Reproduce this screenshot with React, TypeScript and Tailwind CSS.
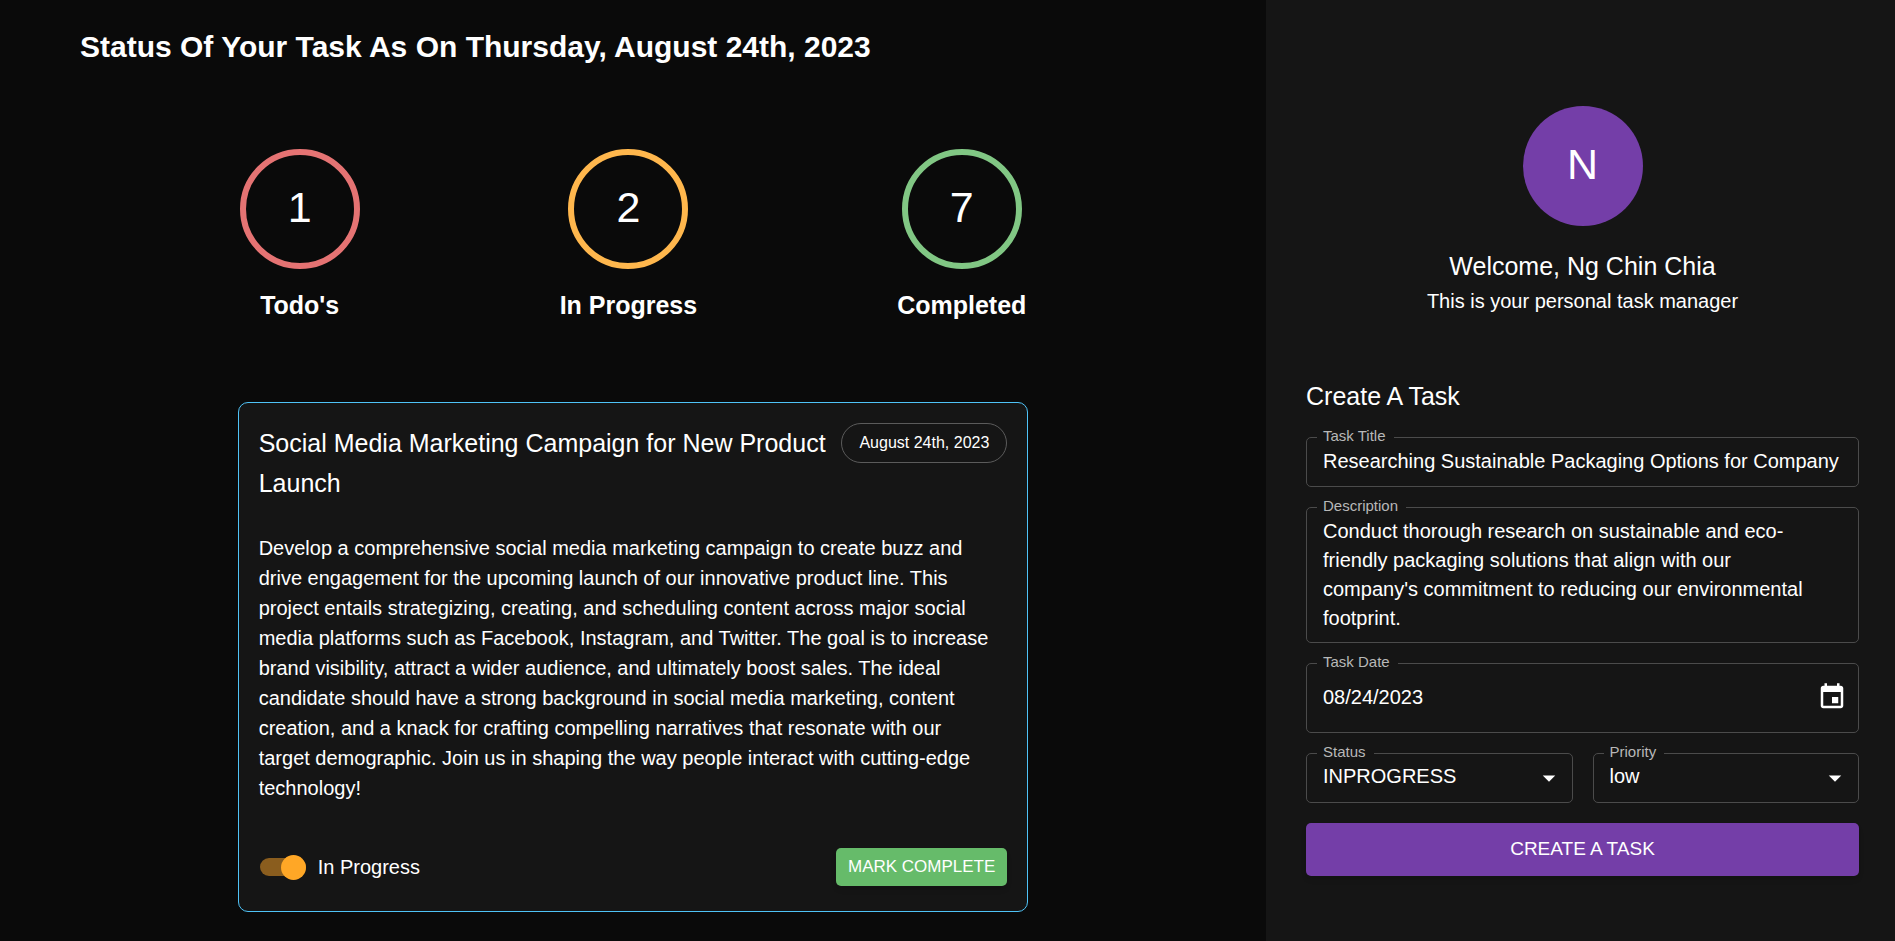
import { useState } from 'react';
import type { ReactNode } from 'react';

const stats = [
  { label: "Todo's", count: 1, ring: 'border-[#e57373]' },
  { label: 'In Progress', count: 2, ring: 'border-[#ffb74d]' },
  { label: 'Completed', count: 7, ring: 'border-[#81c784]' },
];

function Stat({ label, count, ring }: { label: string; count: number; ring: string }) {
  return (
    <div className="flex flex-col items-center gap-4">
      <div
        className={`flex size-[120px] items-center justify-center rounded-full border-6 pb-1 text-[43px] leading-none ${ring}`}
      >
        {count}
      </div>
      <h2 className="text-[25px] leading-10 font-bold">{label}</h2>
    </div>
  );
}

function Field({ id, label, children }: { id: string; label: string; children: ReactNode }) {
  return (
    <div className="relative rounded-[5px] border border-[#4b4b4b]">
      <label
        htmlFor={id}
        className="absolute -top-3 left-[10px] bg-[#151515] pr-2 pl-1.5 text-[15px] leading-5 text-[#b8b8b8]"
      >
        {label}
      </label>
      {children}
    </div>
  );
}

function Select({ id, label, options }: { id: string; label: string; options: string[] }) {
  return (
    <Field id={id} label={label}>
      <select
        id={id}
        className="block h-12 w-full appearance-none bg-transparent pr-10 pb-1 pl-4 text-xl outline-none"
      >
        {options.map((option) => (
          <option key={option}>{option}</option>
        ))}
      </select>
      <svg
        viewBox="0 0 24 24"
        className="pointer-events-none absolute top-[9px] right-2 size-[30px] fill-white"
        aria-hidden="true"
      >
        <path d="M7 10l5 5 5-5z" />
      </svg>
    </Field>
  );
}

function TaskCard() {
  const [active, setActive] = useState(true);
  return (
    <article className="rounded-[10px] border border-[#4fc3f7] bg-[#151515] p-5">
      <header className="flex items-start justify-between">
        <h3 className="text-[25px] leading-10">
          Social Media Marketing Campaign for New Product Launch
        </h3>
        <span className="flex h-10 shrink-0 items-center rounded-full border border-[#5b5b5b] px-[17px] text-base">
          August 24th, 2023
        </span>
      </header>
      <p className="mt-[30px] pr-3 text-xl leading-[30px]">
        Develop a comprehensive social media marketing campaign to create buzz and drive engagement
        for the upcoming launch of our innovative product line. This project entails strategizing,
        creating, and scheduling content across major social media platforms such as Facebook,
        Instagram, and Twitter. The goal is to increase brand visibility, attract a wider audience,
        and ultimately boost sales. The ideal candidate should have a strong background in social
        media marketing, content creation, and a knack for crafting compelling narratives that
        resonate with our target demographic. Join us in shaping the way people interact with
        cutting-edge technology!
      </p>
      <footer className="mt-10 flex h-12 items-center justify-between">
        <label className="flex items-center gap-3 text-xl">
          <span className="relative flex h-[25px] w-[47px] items-center justify-end">
            <input
              type="checkbox"
              role="switch"
              checked={active}
              onChange={() => setActive(!active)}
              className="peer h-[18px] w-[46px] appearance-none rounded-full bg-white/30 checked:bg-[#8a5d1e]"
            />
            <span className="pointer-events-none absolute left-0 size-[25px] rounded-full bg-[#ffa726] peer-checked:left-[22px]" />
          </span>
          In Progress
        </label>
        <button
          type="button"
          className="h-[38px] rounded-[5px] bg-[#66bb6a] px-3 text-[17px] shadow-md"
        >
          MARK COMPLETE
        </button>
      </footer>
    </article>
  );
}

function CreateTaskForm() {
  return (
    <form className="mt-[59px] flex flex-col gap-5" onSubmit={(e) => e.preventDefault()}>
      <h2 className="text-[25px] leading-[42px]">Create A Task</h2>
      <Field id="title" label="Task Title">
        <input
          id="title"
          type="text"
          defaultValue="Researching Sustainable Packaging Options for Company"
          className="block h-12 w-full bg-transparent px-4 pb-0.5 text-xl outline-none"
        />
      </Field>
      <Field id="description" label="Description">
        <textarea
          id="description"
          rows={4}
          defaultValue="Conduct thorough research on sustainable and eco-friendly packaging solutions that align with our company's commitment to reducing our environmental footprint."
          className="block w-full resize-none overflow-hidden bg-transparent py-[9px] pr-8 pl-4 text-xl leading-[29px] outline-none"
        />
      </Field>
      <Field id="date" label="Task Date">
        <div className="flex h-[68px] items-center pr-[11px] pb-0.5 pl-4">
          <input
            id="date"
            type="text"
            defaultValue="08/24/2023"
            className="min-w-0 flex-1 bg-transparent text-xl outline-none"
          />
          <button type="button" aria-label="Choose date">
            <svg viewBox="0 0 24 24" className="size-[30px] fill-white" aria-hidden="true">
              <path d="M17 12h-5v5h5v-5zM16 1v2H8V1H6v2H5c-1.11 0-1.99.9-1.99 2L3 19c0 1.1.89 2 2 2h14c1.1 0 2-.9 2-2V5c0-1.1-.9-2-2-2h-1V1h-2zm3 18H5V8h14v11z" />
            </svg>
          </button>
        </div>
      </Field>
      <div className="grid grid-cols-2 gap-5">
        <Select id="status" label="Status" options={['INPROGRESS', 'TODO', 'COMPLETED']} />
        <Select id="priority" label="Priority" options={['low', 'normal', 'high']} />
      </div>
      <button type="submit" className="h-[53px] rounded-[5px] bg-[#743ea8] text-[19px] shadow-md">
        CREATE A TASK
      </button>
    </form>
  );
}

export default function App() {
  return (
    <div className="grid min-h-screen grid-cols-[1266fr_629fr] bg-[#0a0a0a] font-['Liberation_Sans',Arial,sans-serif] text-white">
      <main className="px-10">
        <h1 className="px-10 pt-5 text-[30px] leading-[53px] font-bold">
          Status Of Your Task As On Thursday, August 24th, 2023
        </h1>
        <div className="mx-auto w-2/3 pt-[76px]">
          <section className="flex justify-between px-0.5">
            {stats.map((stat) => (
              <Stat key={stat.label} {...stat} />
            ))}
          </section>
          <section className="mt-[77px]">
            <TaskCard />
          </section>
        </div>
      </main>
      <aside className="bg-[#151515] pt-[106px] pr-9 pl-10">
        <div className="flex flex-col items-center">
          <div className="flex size-[120px] items-center justify-center rounded-full bg-[#743ea8] pb-1 text-[43px] leading-none">
            N
          </div>
          <h2 className="mt-5 text-[25px] leading-10">Welcome, Ng Chin Chia</h2>
          <p className="text-xl leading-[30px]">This is your personal task manager</p>
        </div>
        <CreateTaskForm />
      </aside>
    </div>
  );
}
